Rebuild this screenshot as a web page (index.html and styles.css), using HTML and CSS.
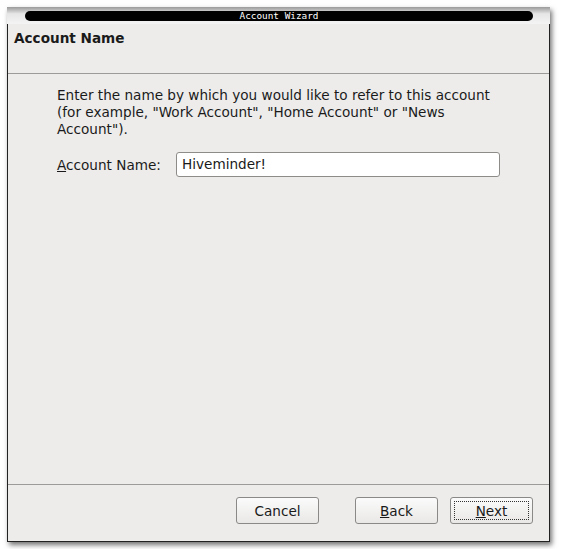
FILE: index.html
```html
<!DOCTYPE html>
<html>
<head>
<meta charset="utf-8">
<link rel="stylesheet" href="styles.css">
</head>
<body>
<div class="window">
  <div class="titlebar">
    <div class="title-pill">Account Wizard</div>
  </div>
  <div class="client">
    <div class="header">Account Name</div>
    <div class="content">
      <p class="desc">Enter the name by which you would like to refer to this account (for example, "Work Account", "Home Account" or "News Account").</p>
      <div class="field">
        <label class="label"><u>A</u>ccount Name:</label>
        <div class="input">Hiveminder!</div>
      </div>
    </div>
    <div class="footer">
      <button class="btn">Cancel</button>
      <button class="btn btn-back"><u>B</u>ack</button>
      <button class="btn btn-next"><span class="focus"><u>N</u>ext</span></button>
    </div>
  </div>
</div>
</body>
</html>
```
FILE: styles.css
```css
html, body {
  margin: 0;
  padding: 0;
  background: #ffffff;
}
body {
  width: 561px;
  height: 549px;
  overflow: hidden;
  font-family: "DejaVu Sans", sans-serif;
}
.window {
  margin: 7px 0 0 7px;
  width: 543px;
  height: 535px;
  display: flex;
  flex-direction: column;
  box-shadow: 2px 3px 5px rgba(0,0,0,0.55);
}
.titlebar {
  height: 17px;
  background: linear-gradient(#9a9a9a, #e6e6e6 40%, #f4f4f4);
  display: flex;
  align-items: center;
  padding: 1px 17px 0 18px;
  box-sizing: border-box;
}
.title-pill {
  flex: 1;
  height: 10px;
  border-radius: 5px;
  background: #000;
  color: #fff;
  font-family: "DejaVu Sans Mono", monospace;
  font-size: 9.4px;
  line-height: 10px;
  text-align: center;
}
.client {
  flex: 1;
  background: #edeceb;
  border-left: 1px solid #222;
  border-right: 1px solid #222;
  border-bottom: 1px solid #222;
  display: flex;
  flex-direction: column;
  font-size: 13.6px;
  color: #1a1a1a;
}
.header {
  height: 50px;
  padding: 6px 0 0 6px;
  box-sizing: border-box;
  font-weight: bold;
  font-size: 13.6px;
  line-height: 17px;
  border-bottom: 1px solid #9c9b99;
}
.content {
  flex: 1;
  padding: 13px 49px 0 49px;
}
.desc {
  margin: 0;
  line-height: 17px;
}
.field {
  margin-top: 14px;
  display: flex;
  align-items: center;
}
.label {
  width: 119px;
}
.input {
  flex: 1;
  height: 23px;
  border: 1px solid #8e8c89;
  border-radius: 3px;
  background: #fff;
  padding-left: 5px;
  line-height: 23px;
}
.footer {
  height: 57px;
  border-top: 1px solid #9c9b99;
  display: flex;
  align-items: flex-start;
  justify-content: flex-end;
  padding: 12px 16px 0 0;
  box-sizing: border-box;
}
.btn {
  width: 83px;
  height: 27px;
  border: 1px solid #8a8987;
  border-radius: 3px;
  background: linear-gradient(#fbfbfb, #e9e8e6);
  font-family: "DejaVu Sans", sans-serif;
  font-size: 13.6px;
  color: #1a1a1a;
  padding: 0;
  display: flex;
  align-items: center;
  justify-content: center;
}
.btn-back {
  margin-left: 36px;
}
.btn-next {
  margin-left: 12px;
  padding: 3px;
}
.focus {
  flex: 1;
  align-self: stretch;
  border: 1px dotted #333;
  display: flex;
  align-items: center;
  justify-content: center;
}
```
